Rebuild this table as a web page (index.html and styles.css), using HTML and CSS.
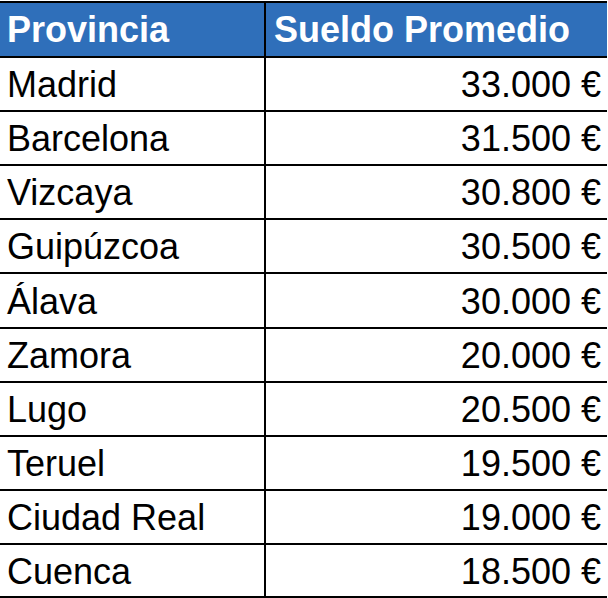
FILE: index.html
```html
<!DOCTYPE html>
<html lang="es">
<head>
<meta charset="utf-8">
<title>Sueldo promedio por provincia</title>
<link rel="stylesheet" href="styles.css">
</head>
<body>
<div class="sheet">
  <div class="row head">
    <div class="cell name">Provincia</div>
    <div class="cell value">Sueldo Promedio</div>
  </div>
  <div class="row"><div class="cell name">Madrid</div><div class="cell num">33.000 €</div></div>
  <div class="row"><div class="cell name">Barcelona</div><div class="cell num">31.500 €</div></div>
  <div class="row"><div class="cell name">Vizcaya</div><div class="cell num">30.800 €</div></div>
  <div class="row"><div class="cell name">Guipúzcoa</div><div class="cell num">30.500 €</div></div>
  <div class="row"><div class="cell name">Álava</div><div class="cell num">30.000 €</div></div>
  <div class="row"><div class="cell name">Zamora</div><div class="cell num">20.000 €</div></div>
  <div class="row"><div class="cell name">Lugo</div><div class="cell num">20.500 €</div></div>
  <div class="row"><div class="cell name">Teruel</div><div class="cell num">19.500 €</div></div>
  <div class="row"><div class="cell name">Ciudad Real</div><div class="cell num">19.000 €</div></div>
  <div class="row last"><div class="cell name">Cuenca</div><div class="cell num">18.500 €</div></div>
</div>
</body>
</html>
```
FILE: styles.css
```css
html, body {
  margin: 0;
  padding: 0;
  background: #ffffff;
}
body {
  padding-top: 1px;
  font-family: "Liberation Sans", Arial, Helvetica, sans-serif;
  font-size: 36px;
  color: #000000;
}
.sheet {
  width: 607px;
  border-top: 2px solid #000000;
}
.row {
  display: grid;
  grid-template-columns: 266px 1fr;
  height: 54.2px;
  box-sizing: border-box;
  border-bottom: 2px solid #000000;
}
.row.head {
  height: 54.7px;
  background: #2f6fba;
  color: #ffffff;
  font-weight: bold;
}
.row.last {
  height: 53px;
}
.cell {
  display: flex;
  align-items: center;
  padding-top: 2px;
  box-sizing: border-box;
  white-space: nowrap;
}
.cell.name {
  padding-left: 7px;
  border-right: 2px solid #000000;
}
.cell.value {
  padding-left: 8px;
}
.cell.num {
  justify-content: flex-end;
  padding-right: 6px;
}
```
